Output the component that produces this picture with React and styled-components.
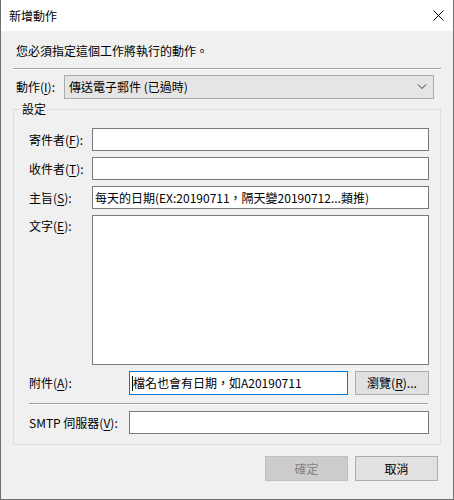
import React from 'react';
import styled, { createGlobalStyle } from 'styled-components';

const GlobalStyle = createGlobalStyle`
  html, body {
    margin: 0;
    padding: 0;
    background: #ffffff;
  }
  * {
    box-sizing: border-box;
  }
`;

const Dialog = styled.div`
  width: 454px;
  height: 500px;
  display: flex;
  flex-direction: column;
  border: 1px solid #6f6f6f;
  border-top: none;
  background: #f0f0f0;
  font-family: "Noto Sans CJK TC", "Microsoft JhengHei UI", sans-serif;
  font-size: 12px;
  line-height: 16px;
  color: #000;
`;

const TitleBar = styled.div`
  height: 31px;
  flex-shrink: 0;
  display: flex;
  align-items: center;
  justify-content: space-between;
  padding-left: 8px;
  padding-right: 9px;
  background: #ffffff;
`;

const Title = styled.span`
  font-size: 12px;
`;

const CloseIcon = styled.svg`
  width: 11px;
  height: 11px;
  margin-bottom: 1px;
`;

const Body = styled.div`
  flex: 1;
  display: flex;
  flex-direction: column;
  padding: 12px 12px 0 12px;
`;

const Instruction = styled.div`
  padding-left: 3px;
`;

const Separator = styled.div`
  height: 2px;
  border-top: 1px solid #a0a0a0;
  border-bottom: 1px solid #ffffff;
  margin-top: ${p => p.$top || 0}px;
  margin-right: ${p => p.$right || 0}px;
`;

const ActionRow = styled.div`
  display: flex;
  align-items: center;
  margin-top: 5px;
  padding-left: 3px;
  padding-right: 7px;
`;

const Label = styled.div`
  width: ${p => p.$width}px;
  flex-shrink: 0;
  white-space: nowrap;
  align-self: ${p => (p.$top ? 'flex-start' : 'center')};
  padding-top: ${p => (p.$top ? 3 : 0)}px;
`;

const Mnemonic = styled.span`
  text-decoration: underline;
  text-underline-offset: 2px;
`;

const Combo = styled.div`
  flex: 1;
  height: 24px;
  display: flex;
  align-items: center;
  justify-content: space-between;
  padding: 0 6px 0 4px;
  background: #e5e5e5;
  border: 1px solid #acacac;
`;

const Chevron = styled.svg`
  width: 10px;
  height: 6px;
`;

const Group = styled.fieldset`
  margin: 2px 0 0 0;
  padding: 11px 11px 10px 15px;
  border: 1px solid #dcdcdc;
  display: flex;
  flex-direction: column;
  gap: 6px;
`;

const Legend = styled.legend`
  margin-left: -10px;
  padding: 0 3px;
  line-height: 16px;
`;

const Row = styled.div`
  display: flex;
  align-items: center;
`;

const Field = styled.div`
  flex: 1;
  height: ${p => p.$height || 23}px;
  display: flex;
  align-items: ${p => (p.$multi ? 'flex-start' : 'center')};
  padding-left: 2px;
  background: #ffffff;
  border: 1px solid ${p => (p.$focused ? '#0078d7' : '#7a7a7a')};
  white-space: nowrap;
  overflow: hidden;
`;

const Caret = styled.span`
  display: inline-block;
  width: 1px;
  height: 15px;
  background: #000;
`;

const Button = styled.div`
  width: ${p => p.$width}px;
  height: ${p => p.$height}px;
  flex-shrink: 0;
  display: flex;
  align-items: center;
  justify-content: center;
  margin-left: ${p => p.$ml || 0}px;
  background: ${p => (p.$disabled ? '#cccccc' : '#e1e1e1')};
  border: 1px solid ${p => (p.$disabled ? '#bfbfbf' : '#adadad')};
  color: ${p => (p.$disabled ? '#838383' : '#000')};
`;

const Footer = styled.div`
  display: flex;
  justify-content: flex-end;
  gap: 7px;
  margin-top: 11px;
  padding-right: 3px;
`;

export default function App() {
  return (
    <>
      <GlobalStyle />
      <Dialog>
        <TitleBar>
          <Title>新增動作</Title>
          <CloseIcon viewBox="0 0 11 11">
            <path d="M0.5 0.5 L10.5 10.5 M10.5 0.5 L0.5 10.5" stroke="#000" strokeWidth="1" fill="none" />
          </CloseIcon>
        </TitleBar>
        <Body>
          <Instruction>您必須指定這個工作將執行的動作。</Instruction>
          <Separator $top={9} />
          <ActionRow>
            <Label $width={48}>
              動作(<Mnemonic>I</Mnemonic>):
            </Label>
            <Combo>
              <span>傳送電子郵件 (已過時)</span>
              <Chevron viewBox="0 0 10 6">
                <path d="M1 0.5 L5 4.5 L9 0.5" stroke="#333" strokeWidth="1" fill="none" />
              </Chevron>
            </Combo>
          </ActionRow>
          <Group>
            <Legend>設定</Legend>
            <Row>
              <Label $width={63}>
                寄件者(<Mnemonic>F</Mnemonic>):
              </Label>
              <Field />
            </Row>
            <Row>
              <Label $width={63}>
                收件者(<Mnemonic>T</Mnemonic>):
              </Label>
              <Field />
            </Row>
            <Row>
              <Label $width={63}>
                主旨(<Mnemonic>S</Mnemonic>):
              </Label>
              <Field>每天的日期(EX:20190711，隔天變20190712...類推)</Field>
            </Row>
            <Row>
              <Label $width={63} $top>
                文字(<Mnemonic>E</Mnemonic>):
              </Label>
              <Field $height={150} $multi />
            </Row>
            <Row>
              <Label $width={100}>
                附件(<Mnemonic>A</Mnemonic>):
              </Label>
              <Field $height={24} $focused>
                <Caret />
                檔名也會有日期，如A20190711
              </Field>
              <Button $width={74} $height={24} $ml={7}>
                瀏覽(<Mnemonic>R</Mnemonic>)...
              </Button>
            </Row>
            <Separator $top={2} $right={1} />
            <Row>
              <Label $width={100}>
                SMTP 伺服器(<Mnemonic>V</Mnemonic>):
              </Label>
              <Field />
            </Row>
          </Group>
          <Footer>
            <Button $width={83} $height={25} $disabled>
              確定
            </Button>
            <Button $width={83} $height={25}>
              取消
            </Button>
          </Footer>
        </Body>
      </Dialog>
    </>
  );
}
